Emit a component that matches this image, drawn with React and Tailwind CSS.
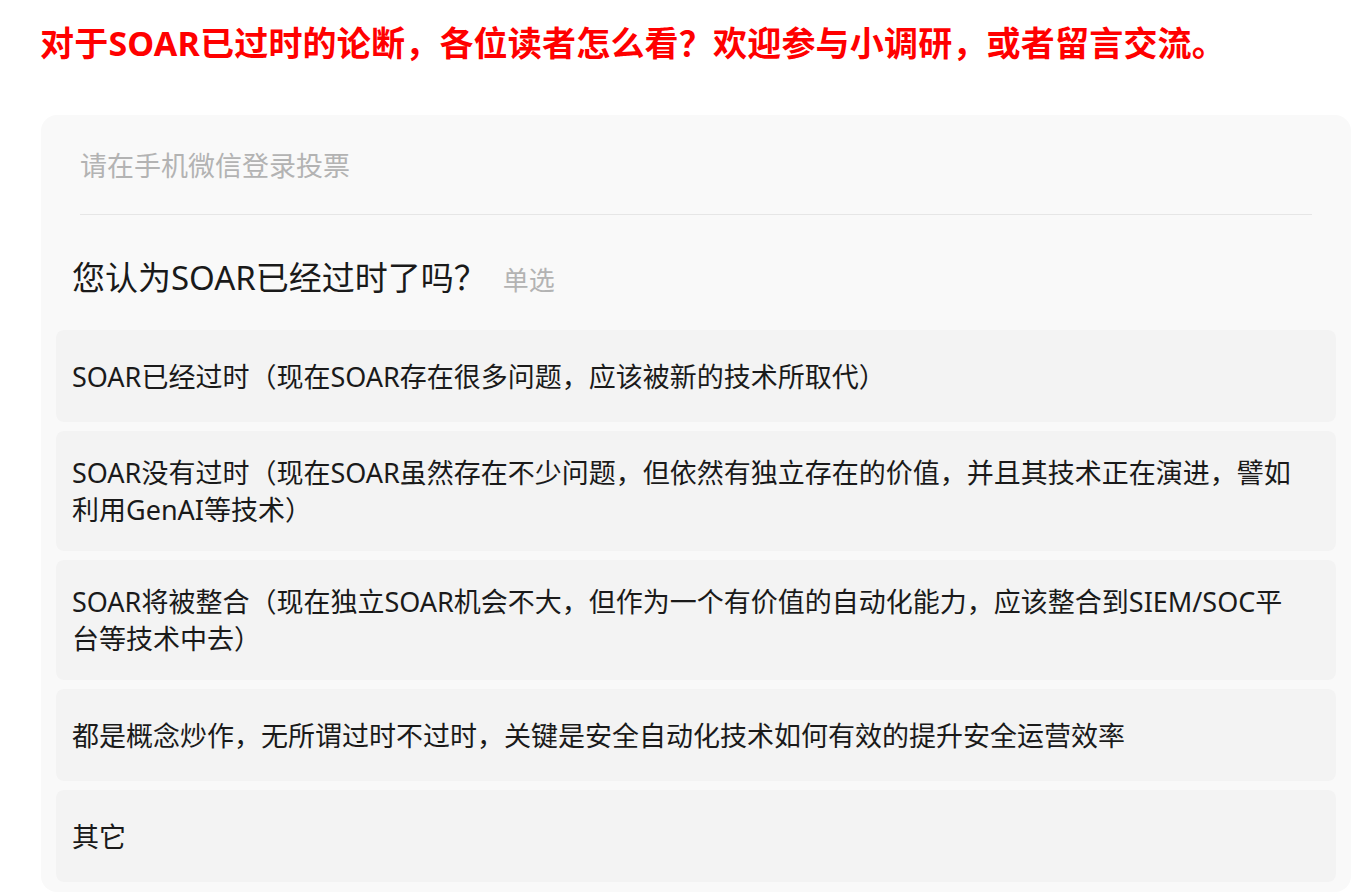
import React from "react";

const options = [
  "SOAR已经过时（现在SOAR存在很多问题，应该被新的技术所取代）",
  "SOAR没有过时（现在SOAR虽然存在不少问题，但依然有独立存在的价值，并且其技术正在演进，譬如利用GenAI等技术）",
  "SOAR将被整合（现在独立SOAR机会不大，但作为一个有价值的自动化能力，应该整合到SIEM/SOC平台等技术中去）",
  "都是概念炒作，无所谓过时不过时，关键是安全自动化技术如何有效的提升安全运营效率",
  "其它",
];

const App = () => {
  return (
    <div
      className="min-h-screen bg-white pl-[40px] pr-[16px]"
      style={{ fontFamily: '"Noto Sans", "Noto Sans CJK SC", sans-serif' }}
    >
      <h1 className="pt-[22px] text-[34px] leading-[42px] font-bold tracking-[0.2px] text-[#ff0000]">
        对于SOAR已过时的论断，各位读者怎么看？欢迎参与小调研，或者留言交流。
      </h1>

      <div className="mt-[51px] ml-[1px] w-[1310px] rounded-2xl bg-[#f9f9f9] pb-[10px]">
        {/* vote hint */}
        <div className="mx-[39px] border-b border-[#e6e6e6] pt-[33px] pb-[30px] text-[27px] leading-[36px] text-[#b3b3b3]">
          请在手机微信登录投票
        </div>

        {/* question */}
        <div className="mt-[42px] mb-[29px] flex items-baseline px-[31px] leading-[42px]">
          <span className="text-[33px] text-[#1a1a1a]">您认为SOAR已经过时了吗？</span>
          <span className="ml-[16px] text-[26px] text-[#b3b3b3]">单选</span>
        </div>

        {/* options */}
        <div className="flex flex-col gap-[9px] px-[15px]">
          {options.map((item, i) => (
            <div
              key={i}
              className="flex min-h-[92px] items-center rounded-lg bg-[#f3f3f3] pl-[16px] pr-[34px] py-[23px] text-[27px] leading-[37px] text-[#1a1a1a]"
            >
              {item}
            </div>
          ))}
        </div>
      </div>
    </div>
  );
};

export default App;
